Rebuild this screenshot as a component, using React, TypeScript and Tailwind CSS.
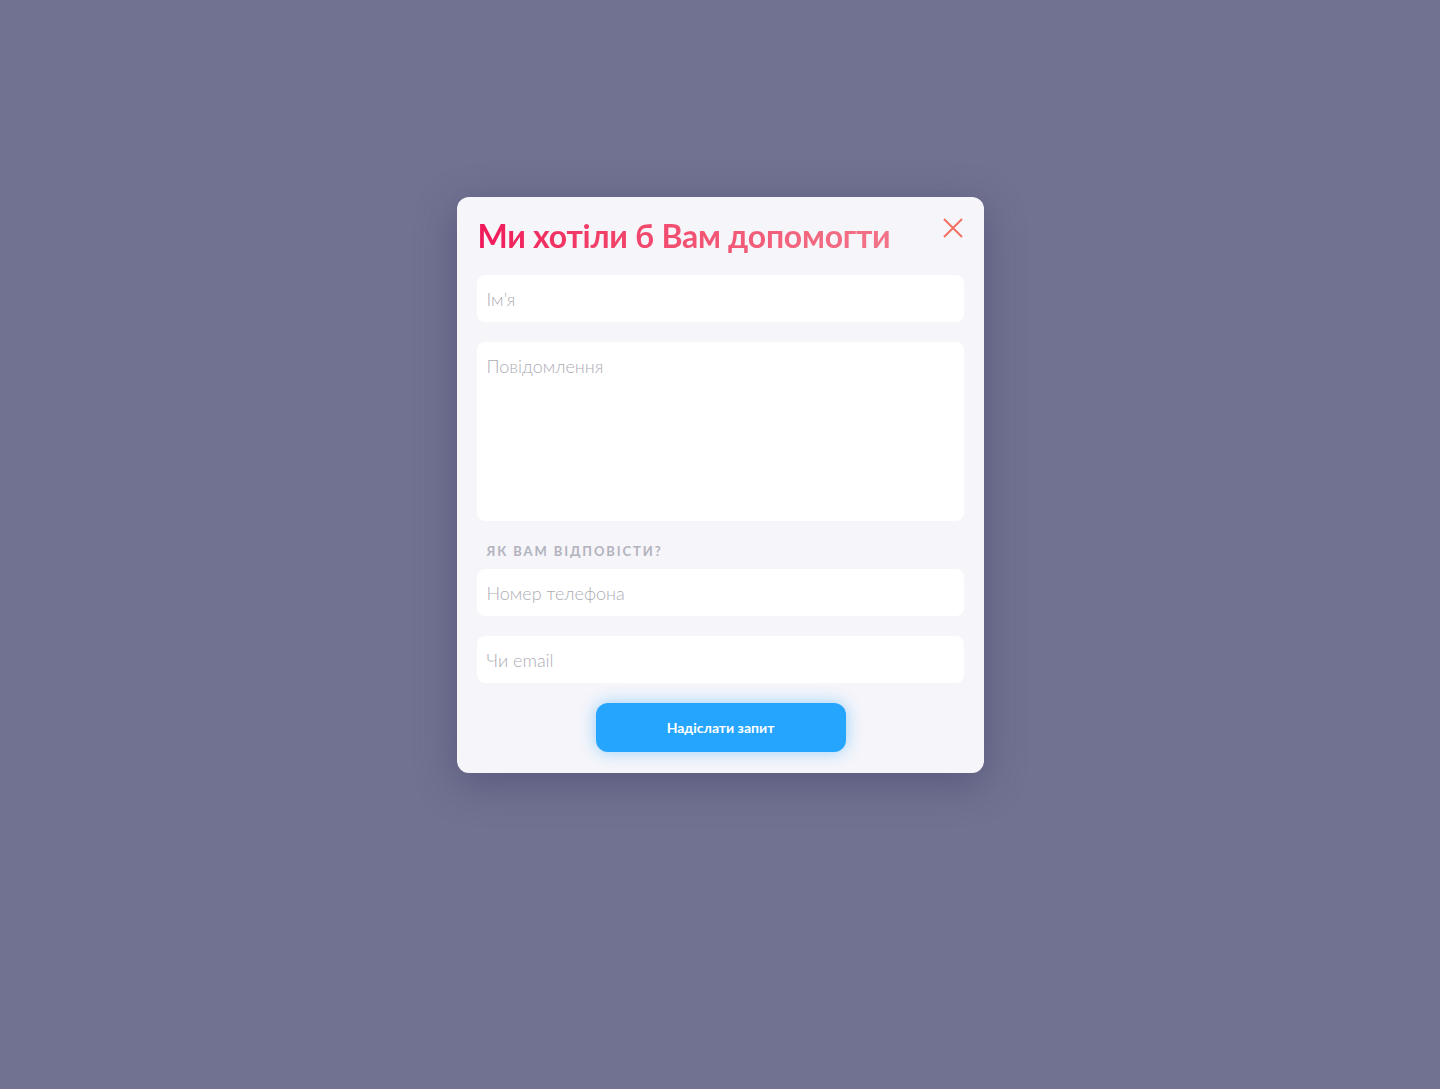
import React from 'react'

const field =
  'w-full rounded-[8px] bg-white px-[10px] text-[18px] font-light text-[#555] placeholder:text-[#adadb6] outline-none'

export default function App() {
  return (
    <div
      className="min-h-[1089px] w-full bg-[#717191] flex justify-center pt-[197px]"
      style={{ fontFamily: 'Lato, "Noto Sans", sans-serif' }}
    >
      <div className="relative w-[527px] h-[576px] rounded-[12px] bg-[#f5f5fa] px-5 pt-5 pb-[21px] flex flex-col shadow-[0_10px_40px_rgba(60,60,100,0.45)]">
        <button className="absolute right-[20px] top-[20px] w-[22px] h-[22px] flex items-center justify-center text-[#f27060]">
          <svg width="22" height="22" viewBox="0 0 22 22" fill="none" stroke="currentColor" strokeWidth="2">
            <path d="M2 2L20 20M20 2L2 20" />
          </svg>
        </button>
        <h1 className="h-[38px] leading-[38px] mb-5 pl-px text-[32px] font-bold tracking-[-0.27px] bg-gradient-to-r from-[#f0155a] to-[#f27389] bg-clip-text text-transparent w-fit">
          Ми хотіли б Вам допомогти
        </h1>
        <input placeholder="Ім’я" className={`h-[47px] ${field}`} />
        <textarea placeholder="Повідомлення" className={`mt-5 h-[179px] resize-none pt-[11px] ${field}`} />
        <div className="mt-[22px] mb-[10px] pl-[10px] h-4 leading-4 text-[13px] font-bold uppercase tracking-[1.9px] text-[#b3b3bd]">
          Як вам відповісти?
        </div>
        <input placeholder="Номер телефона" className={`h-[47px] ${field}`} />
        <input placeholder="Чи email" className={`mt-5 h-[47px] ${field}`} />
        <div className="mt-5 flex justify-center">
          <button className="ml-px w-[250px] h-[49px] rounded-[12px] bg-[#25a5fe] text-white text-[14px] font-bold shadow-[0_0_16px_rgba(37,165,254,0.45)]">
            Надіслати запит
          </button>
        </div>
      </div>
    </div>
  )
}
